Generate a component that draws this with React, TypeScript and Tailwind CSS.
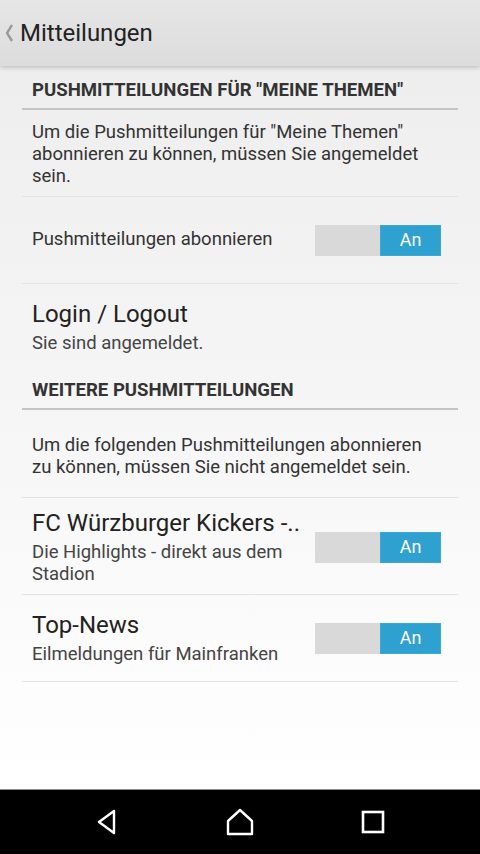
const font = "font-['Roboto','Noto_Sans',sans-serif]";

function Toggle() {
  return (
    <div className="flex h-[31px] w-[126px] shrink-0 bg-[#d9d9d9]">
      <div className="ml-auto flex h-full w-[61px] items-center justify-center border border-[#3aa9d6] bg-[#2ea1d1] text-[18px] leading-none text-white">
        An
      </div>
    </div>
  );
}

function SectionHeader({ title }: { title: string }) {
  return (
    <div className="border-b-2 border-[#c4c4c4] px-[10px] pt-[12px] pb-[6px]">
      <p className="text-[18.6px] font-bold leading-[24px] text-[#333]">{title}</p>
    </div>
  );
}

function Divider() {
  return <div className="h-px bg-[#e3e3e3]" />;
}

function BackIcon() {
  return (
    <svg width="12" height="20" viewBox="0 0 12 20" className="text-[#9a9a9a]">
      <path d="M9 2 L4 10 L9 18" fill="none" stroke="currentColor" strokeWidth="2.4" />
    </svg>
  );
}

function NavBar() {
  return (
    <div className="flex h-[65px] items-center justify-center gap-[73px] border-t border-[#8a8a8a] bg-black">
      <div className="flex w-[60px] justify-center">
        <svg width="28" height="28" viewBox="0 0 28 28">
          <path d="M21 3 L6 14 L21 25 Z" fill="none" stroke="white" strokeWidth="2.4" strokeLinejoin="round" />
        </svg>
      </div>
      <div className="flex w-[60px] justify-center">
        <svg width="30" height="30" viewBox="0 0 30 30">
          <path d="M15 3 L27 14 L27 27 L3 27 L3 14 Z" fill="none" stroke="white" strokeWidth="2.4" strokeLinejoin="round" />
        </svg>
      </div>
      <div className="flex w-[60px] justify-center">
        <svg width="26" height="26" viewBox="0 0 26 26">
          <rect x="3" y="3" width="20" height="20" fill="none" stroke="white" strokeWidth="2.6" />
        </svg>
      </div>
    </div>
  );
}

export default function App() {
  return (
    <div className={`flex h-[854px] w-[480px] flex-col overflow-hidden ${font}`}>
      {/* Action bar */}
      <div className="relative z-10 flex h-[66px] items-center gap-[5px] bg-gradient-to-b from-[#e6e6e6] to-[#dcdcdc] pl-[3px] shadow-[0_2px_4px_rgba(0,0,0,0.18)]">
        <BackIcon />
        <h1 className="text-[24px] leading-none text-[#222]">Mitteilungen</h1>
      </div>

      {/* Content */}
      <div className="flex-1 bg-gradient-to-b from-[#eeeeee] via-[#f6f6f6] to-white px-[22px]">
        <SectionHeader title={'PUSHMITTEILUNGEN FÜR "MEINE THEMEN"'} />
        <div className="pl-[10px] pr-[26px] pt-[11px] pb-[9px]">
          <p className="text-[18.5px] leading-[22px] text-[#333]">
            Um die Pushmitteilungen für "Meine Themen" abonnieren zu können, müssen Sie angemeldet sein.
          </p>
        </div>
        <Divider />
        <div className="flex h-[86px] items-center pl-[10px] pr-[17px]">
          <p className="flex-1 text-[18.5px] text-[#333]">Pushmitteilungen abonnieren</p>
          <Toggle />
        </div>
        <Divider />
        <div className="px-[10px] pt-[16px] pb-[12px]">
          <p className="text-[24px] leading-[28px] text-[#222]">Login / Logout</p>
          <p className="mt-[4px] text-[18.5px] leading-[22px] text-[#444]">Sie sind angemeldet.</p>
        </div>

        <SectionHeader title="WEITERE PUSHMITTEILUNGEN" />
        <div className="pl-[10px] pr-[26px] pt-[24px] pb-[19px]">
          <p className="text-[18.5px] leading-[22px] text-[#333]">
            Um die folgenden Pushmitteilungen abonnieren zu können, müssen Sie nicht angemeldet sein.
          </p>
        </div>
        <Divider />
        <div className="flex items-center pl-[10px] pr-[17px] pt-[11px] pb-[9px]">
          <div className="flex-1 pr-[15px]">
            <p className="whitespace-nowrap text-[24px] leading-[28px] text-[#222]">FC Würzburger Kickers -..</p>
            <p className="mt-[4px] text-[18.5px] leading-[22px] text-[#444]">Die Highlights - direkt aus dem Stadion</p>
          </div>
          <Toggle />
        </div>
        <Divider />
        <div className="flex items-center pl-[10px] pr-[17px] pt-[16px] pb-[16px]">
          <div className="flex-1 pr-[15px]">
            <p className="text-[24px] leading-[28px] text-[#222]">Top-News</p>
            <p className="mt-[4px] text-[18.5px] leading-[22px] text-[#444]">Eilmeldungen für Mainfranken</p>
          </div>
          <Toggle />
        </div>
        <Divider />
      </div>

      <NavBar />
    </div>
  );
}
